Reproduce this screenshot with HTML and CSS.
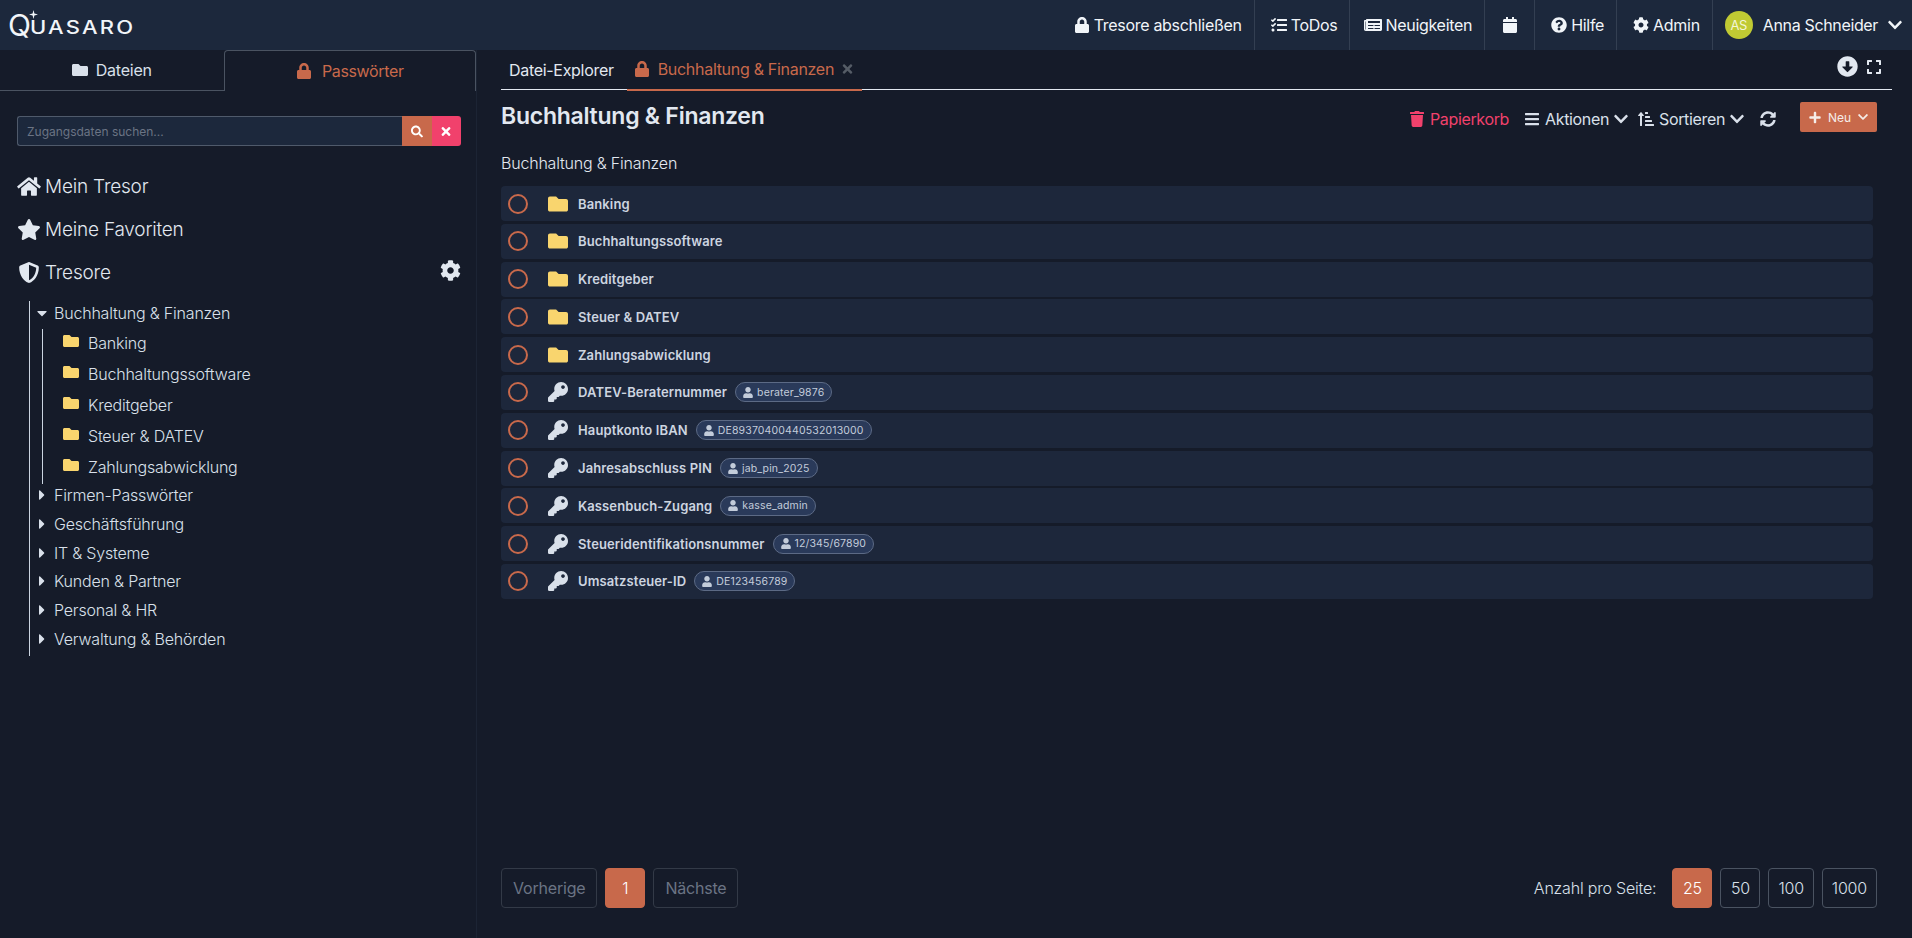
FILE: index.html
```html
<!DOCTYPE html>
<html lang="de">
<head>
  <meta charset="UTF-8">
  <title>Quasaro – Buchhaltung & Finanzen</title>
  <link rel="stylesheet" href="styles.css">
</head>
<body>

<!-- Icons -->
<svg class="sprite" xmlns="http://www.w3.org/2000/svg">
  <symbol id="i-folder" viewBox="0 0 512 512"><path d="M464 128H272l-64-64H48C21.49 64 0 85.49 0 112v288c0 26.51 21.49 48 48 48h416c26.51 0 48-21.49 48-48V176c0-26.51-21.49-48-48-48z"/></symbol>
  <symbol id="i-lock" viewBox="0 0 448 512"><path d="M400 224h-24v-72C376 68.2 307.8 0 224 0S72 68.2 72 152v72H48c-26.5 0-48 21.5-48 48v192c0 26.5 21.5 48 48 48h352c26.5 0 48-21.5 48-48V272c0-26.5-21.5-48-48-48zm-104 0H152v-72c0-39.7 32.3-72 72-72s72 32.3 72 72v72z"/></symbol>
  <symbol id="i-search" viewBox="0 0 512 512"><path d="M505 442.7L405.3 343c-4.5-4.5-10.6-7-17-7H372c27.6-35.3 44-79.7 44-128C416 93.1 322.9 0 208 0S0 93.1 0 208s93.1 208 208 208c48.3 0 92.7-16.4 128-44v16.3c0 6.4 2.5 12.5 7 17l99.7 99.7c9.4 9.4 24.6 9.4 33.9 0l28.3-28.3c9.4-9.4 9.4-24.6.1-34zM208 336c-70.7 0-128-57.2-128-128 0-70.7 57.2-128 128-128 70.7 0 128 57.2 128 128 0 70.7-57.2 128-128 128z"/></symbol>
  <symbol id="i-times" viewBox="0 0 352 512"><path d="M242.72 256l100.07-100.07c12.28-12.28 12.28-32.19 0-44.48l-22.24-22.24c-12.28-12.28-32.19-12.28-44.48 0L176 189.28 75.93 89.21c-12.28-12.28-32.19-12.28-44.48 0L9.21 111.45c-12.28 12.28-12.28 32.19 0 44.48L109.28 256 9.21 356.07c-12.28 12.28-12.28 32.19 0 44.48l22.24 22.24c12.28 12.28 32.2 12.28 44.48 0L176 322.72l100.07 100.07c12.28 12.28 32.2 12.28 44.48 0l22.24-22.24c12.28-12.28 12.28-32.19 0-44.48L242.72 256z"/></symbol>
  <symbol id="i-home" viewBox="0 0 576 512"><path d="M280.37 148.26L96 300.11V464a16 16 0 0 0 16 16l112.06-.29a16 16 0 0 0 15.92-16V368a16 16 0 0 1 16-16h64a16 16 0 0 1 16 16v95.64a16 16 0 0 0 16 16.05L464 480a16 16 0 0 0 16-16V300L295.67 148.26a12.19 12.19 0 0 0-15.3 0zM571.6 251.47L488 182.56V44.05a12 12 0 0 0-12-12h-56a12 12 0 0 0-12 12v72.61L318.47 43a48 48 0 0 0-61 0L4.34 251.47a12 12 0 0 0-1.6 16.9l25.5 31A12 12 0 0 0 45.15 301l235.22-193.74a12.19 12.19 0 0 1 15.3 0L530.9 301a12 12 0 0 0 16.9-1.6l25.5-31a12 12 0 0 0-1.7-16.93z"/></symbol>
  <symbol id="i-star" viewBox="0 0 576 512"><path d="M259.3 17.8L194 150.2 47.9 171.5c-26.2 3.8-36.7 36.1-17.7 54.6l105.7 103-25 145.5c-4.5 26.3 23.2 46 46.4 33.7L288 439.6l130.7 68.7c23.2 12.2 50.9-7.4 46.4-33.7l-25-145.5 105.7-103c19-18.5 8.5-50.8-17.7-54.6L382 150.2 316.7 17.8c-11.7-23.6-45.6-23.9-57.4 0z"/></symbol>
  <symbol id="i-shield" viewBox="0 0 512 512"><path d="M466.5 83.7l-192-80a48.15 48.15 0 0 0-36.9 0l-192 80C27.7 91.1 16 108.6 16 128c0 198.5 114.5 335.7 221.5 380.3 11.8 4.9 25.1 4.9 36.9 0C360.1 472.6 496 349.3 496 128c0-19.4-11.7-36.9-29.5-44.3zM256.1 446.3l-.1-381 175.9 73.3c-3.3 151.4-82.1 261.1-175.8 307.7z"/></symbol>
  <symbol id="i-cog" viewBox="0 0 512 512"><path d="M487.4 315.7l-42.6-24.6c4.3-23.2 4.3-47 0-70.2l42.6-24.6c4.9-2.8 7.1-8.6 5.5-14-11.1-35.6-30-67.8-54.7-94.6-3.8-4.1-10-5.1-14.8-2.3L380.8 110c-17.9-15.4-38.5-27.3-60.8-35.1V25.8c0-5.6-3.9-10.5-9.4-11.7-36.7-8.2-74.3-7.8-109.2 0-5.5 1.2-9.4 6.1-9.4 11.7V75c-22.2 7.9-42.8 19.8-60.8 35.1L88.7 85.5c-4.9-2.8-11-1.9-14.8 2.3-24.7 26.7-43.6 58.9-54.7 94.6-1.7 5.4.6 11.2 5.5 14L67.3 221c-4.3 23.2-4.3 47 0 70.2l-42.6 24.6c-4.9 2.8-7.1 8.6-5.5 14 11.1 35.6 30 67.8 54.7 94.6 3.8 4.1 10 5.1 14.8 2.3l42.6-24.6c17.9 15.4 38.5 27.3 60.8 35.1v49.2c0 5.6 3.9 10.5 9.4 11.7 36.7 8.2 74.3 7.8 109.2 0 5.5-1.2 9.4-6.1 9.4-11.7v-49.2c22.2-7.9 42.8-19.8 60.8-35.1l42.6 24.6c4.9 2.8 11 1.9 14.8-2.3 24.7-26.7 43.6-58.9 54.7-94.6 1.5-5.5-.7-11.3-5.6-14.1zM256 336c-44.1 0-80-35.9-80-80s35.9-80 80-80 80 35.9 80 80-35.9 80-80 80z"/></symbol>
  <symbol id="i-caret-down" viewBox="0 0 320 512"><path d="M31.3 192h257.3c17.8 0 26.7 21.5 14.1 34.1L174.1 354.8c-7.8 7.8-20.5 7.8-28.3 0L17.2 226.1C4.6 213.5 13.5 192 31.3 192z"/></symbol>
  <symbol id="i-caret-right" viewBox="0 0 192 512"><path d="M0 384.662V127.338c0-17.818 21.543-26.741 34.142-14.142l128.662 128.662c7.81 7.81 7.81 20.474 0 28.284L34.142 398.804C21.543 411.404 0 402.48 0 384.662z"/></symbol>
  <symbol id="i-key" viewBox="0 0 512 512"><path d="M512 176.001C512 273.203 433.202 352 336 352c-11.22 0-22.19-1.062-32.827-3.069l-24.012 27.014A23.999 23.999 0 0 1 261.223 384H224v40c0 13.255-10.745 24-24 24h-40v40c0 13.255-10.745 24-24 24H24c-13.255 0-24-10.745-24-24v-78.059c0-6.365 2.529-12.47 7.029-16.971l161.802-161.802C163.108 213.814 160 195.271 160 176 160 78.798 238.797.001 335.999 0 433.488-.001 512 78.511 512 176.001zM336 128c0 26.51 21.49 48 48 48s48-21.49 48-48-21.49-48-48-48-48 21.49-48 48z"/></symbol>
  <symbol id="i-user" viewBox="0 0 448 512"><path d="M224 256c70.7 0 128-57.3 128-128S294.7 0 224 0 96 57.3 96 128s57.3 128 128 128zm89.6 32h-16.7c-22.2 10.2-46.9 16-72.9 16s-50.6-5.8-72.9-16h-16.7C60.2 288 0 348.2 0 422.4V464c0 26.5 21.5 48 48 48h352c26.5 0 48-21.5 48-48v-41.6c0-74.2-60.2-134.4-134.4-134.4z"/></symbol>
  <symbol id="i-tasks" viewBox="0 0 512 512"><path d="M139.61 35.5a12 12 0 0 0-17 0L58.93 98.81l-22.7-22.12a12 12 0 0 0-17 0L3.53 92.41a12 12 0 0 0 0 17l47.59 47.4a12.78 12.78 0 0 0 17.61 0l15.59-15.62L156.52 69a12.09 12.09 0 0 0 .09-17zm0 159.19a12 12 0 0 0-17 0l-63.68 63.72-22.7-22.1a12 12 0 0 0-17 0L3.53 252a12 12 0 0 0 0 17L51 316.5a12.77 12.77 0 0 0 17.6 0l15.7-15.69 72.2-72.22a12 12 0 0 0 .09-16.9zM64 368c-26.49 0-48.59 21.5-48.59 48S37.53 464 64 464a48 48 0 0 0 0-96zm432 16H208a16 16 0 0 0-16 16v32a16 16 0 0 0 16 16h288a16 16 0 0 0 16-16v-32a16 16 0 0 0-16-16zm0-320H208a16 16 0 0 0-16 16v32a16 16 0 0 0 16 16h288a16 16 0 0 0 16-16V80a16 16 0 0 0-16-16zm0 160H208a16 16 0 0 0-16 16v32a16 16 0 0 0 16 16h288a16 16 0 0 0 16-16v-32a16 16 0 0 0-16-16z"/></symbol>
  <symbol id="i-news" viewBox="0 0 576 512"><path d="M552 64H88c-13.255 0-24 10.745-24 24v8H24c-13.255 0-24 10.745-24 24v272c0 30.928 25.072 56 56 56h472c26.51 0 48-21.49 48-48V88c0-13.255-10.745-24-24-24zM56 400a8 8 0 0 1-8-8V144h16v248a8 8 0 0 1-8 8zm236-16H140c-6.627 0-12-5.373-12-12v-8c0-6.627 5.373-12 12-12h152c6.627 0 12 5.373 12 12v8c0 6.627-5.373 12-12 12zm208 0H348c-6.627 0-12-5.373-12-12v-8c0-6.627 5.373-12 12-12h152c6.627 0 12 5.373 12 12v8c0 6.627-5.373 12-12 12zm-208-96H140c-6.627 0-12-5.373-12-12v-8c0-6.627 5.373-12 12-12h152c6.627 0 12 5.373 12 12v8c0 6.627-5.373 12-12 12zm208 0H348c-6.627 0-12-5.373-12-12v-8c0-6.627 5.373-12 12-12h152c6.627 0 12 5.373 12 12v8c0 6.627-5.373 12-12 12zm0-96H140c-6.627 0-12-5.373-12-12v-40c0-6.627 5.373-12 12-12h360c6.627 0 12 5.373 12 12v40c0 6.627-5.373 12-12 12z"/></symbol>
  <symbol id="i-calendar" viewBox="0 0 448 512"><path d="M12 192h424c6.6 0 12 5.4 12 12v260c0 26.5-21.5 48-48 48H48c-26.5 0-48-21.5-48-48V204c0-6.6 5.4-12 12-12zm436-44v-36c0-26.5-21.5-48-48-48h-48V12c0-6.6-5.4-12-12-12h-40c-6.6 0-12 5.4-12 12v52H160V12c0-6.6-5.4-12-12-12h-40c-6.6 0-12 5.4-12 12v52H48C21.5 64 0 85.5 0 112v36c0 6.6 5.4 12 12 12h424c6.6 0 12-5.4 12-12z"/></symbol>
  <symbol id="i-help" viewBox="0 0 512 512"><path d="M504 256c0 136.997-111.043 248-248 248S8 392.997 8 256C8 119.083 119.043 8 256 8s248 111.083 248 248zM262.655 90c-54.497 0-89.255 22.957-116.549 63.758-3.536 5.286-2.353 12.415 2.715 16.258l34.699 26.31c5.205 3.947 12.621 3.008 16.665-2.122 17.864-22.658 30.113-35.797 57.303-35.797 20.429 0 45.698 13.148 45.698 32.958 0 14.976-12.363 22.667-32.534 33.976C247.128 238.528 216 254.941 216 296v4c0 6.627 5.373 12 12 12h56c6.627 0 12-5.373 12-12v-1.333c0-28.462 83.186-29.647 83.186-106.667 0-58.002-60.165-102-116.531-102zM256 338c-25.365 0-46 20.635-46 46 0 25.364 20.635 46 46 46s46-20.636 46-46c0-25.365-20.635-46-46-46z"/></symbol>
  <symbol id="i-chevron" viewBox="0 0 448 512"><path d="M207.029 381.476L12.686 187.132c-9.373-9.373-9.373-24.569 0-33.941l22.667-22.667c9.357-9.357 24.522-9.375 33.901-.04L224 284.505l154.745-154.021c9.379-9.335 24.544-9.317 33.901.04l22.667 22.667c9.373 9.373 9.373 24.569 0 33.941L240.971 381.476c-9.373 9.372-24.569 9.372-33.942 0z"/></symbol>
  <symbol id="i-arrow-circle" viewBox="0 0 512 512"><path d="M504 256c0 137-111 248-248 248S8 393 8 256 119 8 256 8s248 111 248 248zM212 140v116h-70.9c-10.7 0-16.1 13-8.5 20.5l114.9 114.3c4.7 4.7 12.2 4.7 16.9 0l114.9-114.3c7.6-7.6 2.2-20.5-8.5-20.5H300V140c0-6.6-5.4-12-12-12h-64c-6.6 0-12 5.4-12 12z"/></symbol>
  <symbol id="i-expand" viewBox="0 0 448 512"><path d="M0 180V56c0-13.3 10.7-24 24-24h124c6.6 0 12 5.4 12 12v40c0 6.6-5.4 12-12 12H64v84c0 6.6-5.4 12-12 12H12c-6.6 0-12-5.4-12-12zM288 44v40c0 6.6 5.4 12 12 12h84v84c0 6.6 5.4 12 12 12h40c6.6 0 12-5.4 12-12V56c0-13.3-10.7-24-24-24H300c-6.6 0-12 5.4-12 12zm148 276h-40c-6.6 0-12 5.4-12 12v84h-84c-6.6 0-12 5.4-12 12v40c0 6.6 5.4 12 12 12h124c13.3 0 24-10.7 24-24V332c0-6.6-5.4-12-12-12zM160 468v-40c0-6.6-5.4-12-12-12H64v-84c0-6.6-5.4-12-12-12H12c-6.6 0-12 5.4-12 12v124c0 13.3 10.7 24 24 24h124c6.6 0 12-5.4 12-12z"/></symbol>
  <symbol id="i-trash" viewBox="0 0 448 512"><path d="M432 32H312l-9.4-18.7A24 24 0 0 0 281.1 0H166.8a23.72 23.72 0 0 0-21.4 13.3L136 32H16A16 16 0 0 0 0 48v32a16 16 0 0 0 16 16h416a16 16 0 0 0 16-16V48a16 16 0 0 0-16-16zM53.2 467a48 48 0 0 0 47.9 45h245.8a48 48 0 0 0 47.9-45L416 128H32z"/></symbol>
  <symbol id="i-bars" viewBox="0 0 448 512"><path d="M16 132h416c8.837 0 16-7.163 16-16V76c0-8.837-7.163-16-16-16H16C7.163 60 0 67.163 0 76v40c0 8.837 7.163 16 16 16zm0 160h416c8.837 0 16-7.163 16-16v-40c0-8.837-7.163-16-16-16H16c-8.837 0-16 7.163-16 16v40c0 8.837 7.163 16 16 16zm0 160h416c8.837 0 16-7.163 16-16v-40c0-8.837-7.163-16-16-16H16c-8.837 0-16 7.163-16 16v40c0 8.837 7.163 16 16 16z"/></symbol>
  <symbol id="i-sort" viewBox="0 0 512 512"><path d="M240 96h64a16 16 0 0 0 16-16V48a16 16 0 0 0-16-16h-64a16 16 0 0 0-16 16v32a16 16 0 0 0 16 16zm0 128h128a16 16 0 0 0 16-16v-32a16 16 0 0 0-16-16H240a16 16 0 0 0-16 16v32a16 16 0 0 0 16 16zm256 192H240a16 16 0 0 0-16 16v32a16 16 0 0 0 16 16h256a16 16 0 0 0 16-16v-32a16 16 0 0 0-16-16zm-256-64h192a16 16 0 0 0 16-16v-32a16 16 0 0 0-16-16H240a16 16 0 0 0-16 16v32a16 16 0 0 0 16 16zM16 160h48v304a16 16 0 0 0 16 16h32a16 16 0 0 0 16-16V160h48c14.21 0 21.39-17.24 11.31-27.31l-80-96a16 16 0 0 0-22.62 0l-80 96C-5.35 142.74 1.78 160 16 160z"/></symbol>
  <symbol id="i-sync" viewBox="0 0 512 512"><path d="M370.72 133.28C339.458 104.008 298.888 87.962 255.848 88c-77.458.068-144.328 53.178-162.791 126.85-1.344 5.363-6.122 9.15-11.651 9.15H24.103c-7.498 0-13.194-6.807-11.807-14.176C33.933 94.924 134.813 8 256 8c66.448 0 126.791 26.136 171.315 68.685L463.03 40.97C478.149 25.851 504 36.559 504 57.941V192c0 13.255-10.745 24-24 24H345.941c-21.382 0-32.09-25.851-16.971-40.971l41.75-41.749zM32 296h134.059c21.382 0 32.09 25.851 16.971 40.971l-41.75 41.75c31.262 29.273 71.835 45.319 114.876 45.28 77.418-.07 144.315-53.144 162.787-126.849 1.344-5.363 6.122-9.15 11.651-9.15h57.304c7.498 0 13.194 6.807 11.807 14.176C478.067 417.076 377.187 504 256 504c-66.448 0-126.791-26.136-171.315-68.685L48.97 471.03C33.851 486.149 8 475.441 8 454.059V320c0-13.255 10.745-24 24-24z"/></symbol>
  <symbol id="i-plus" viewBox="0 0 448 512"><path d="M416 208H272V64c0-17.67-14.33-32-32-32h-32c-17.67 0-32 14.33-32 32v144H32c-17.67 0-32 14.33-32 32v32c0 17.67 14.33 32 32 32h144v144c0 17.67 14.33 32 32 32h32c17.67 0 32-14.33 32-32V304h144c17.67 0 32-14.33 32-32v-32c0-17.67-14.33-32-32-32z"/></symbol>
</svg>

<header class="topbar">
  <div class="logo">
    <span class="logo-q">Q</span><span class="logo-rest">UASARO</span>
    <svg class="logo-spark" viewBox="0 0 10 10"><path d="M5 0 L6 4 L10 5 L6 6 L5 10 L4 6 L0 5 L4 4 Z"/></svg>
  </div>
  <nav class="topnav">
    <a class="topnav-item"><svg class="ic ic-15"><use href="#i-lock"/></svg>Tresore abschließen</a>
    <a class="topnav-item"><svg class="ic ic-16"><use href="#i-tasks"/></svg>ToDos</a>
    <a class="topnav-item item-news"><svg class="ic ic-18"><use href="#i-news"/></svg>Neuigkeiten</a>
    <a class="topnav-item item-cal"><svg class="ic ic-15"><use href="#i-calendar"/></svg></a>
    <a class="topnav-item"><svg class="ic ic-16"><use href="#i-help"/></svg>Hilfe</a>
    <a class="topnav-item"><svg class="ic ic-16"><use href="#i-cog"/></svg>Admin</a>
    <a class="topnav-item topnav-user">
      <span class="avatar">AS</span>
      <span class="user-name">Anna Schneider</span>
      <svg class="ic ic-14"><use href="#i-chevron"/></svg>
    </a>
  </nav>
</header>

<div class="layout">
  <aside class="sidebar">
    <div class="side-tabs">
      <div class="side-tab"><svg class="ic ic-16"><use href="#i-folder"/></svg>Dateien</div>
      <div class="side-tab active"><svg class="ic ic-16"><use href="#i-lock"/></svg>Passwörter</div>
    </div>

    <div class="search">
      <input class="search-input" type="text" placeholder="Zugangsdaten suchen...">
      <button class="search-btn go"><svg class="ic ic-12"><use href="#i-search"/></svg></button>
      <button class="search-btn clear"><svg class="ic ic-12"><use href="#i-times"/></svg></button>
    </div>

    <div class="side-nav">
      <div class="side-link"><svg class="ic ic-side"><use href="#i-home"/></svg>Mein Tresor</div>
      <div class="side-link"><svg class="ic ic-side"><use href="#i-star"/></svg>Meine Favoriten</div>
      <div class="side-link">
        <svg class="ic ic-side"><use href="#i-shield"/></svg>Tresore
        <svg class="ic ic-gear"><use href="#i-cog"/></svg>
      </div>
    </div>

    <div class="tree">
      <div class="tree-row open"><svg class="ic caret"><use href="#i-caret-down"/></svg>Buchhaltung &amp; Finanzen</div>
      <div class="tree-children">
        <div class="tree-child"><svg class="ic tree-folder"><use href="#i-folder"/></svg>Banking</div>
        <div class="tree-child"><svg class="ic tree-folder"><use href="#i-folder"/></svg>Buchhaltungssoftware</div>
        <div class="tree-child"><svg class="ic tree-folder"><use href="#i-folder"/></svg>Kreditgeber</div>
        <div class="tree-child"><svg class="ic tree-folder"><use href="#i-folder"/></svg>Steuer &amp; DATEV</div>
        <div class="tree-child"><svg class="ic tree-folder"><use href="#i-folder"/></svg>Zahlungsabwicklung</div>
      </div>
      <div class="tree-row"><svg class="ic caret"><use href="#i-caret-right"/></svg>Firmen-Passwörter</div>
      <div class="tree-row"><svg class="ic caret"><use href="#i-caret-right"/></svg>Geschäftsführung</div>
      <div class="tree-row"><svg class="ic caret"><use href="#i-caret-right"/></svg>IT &amp; Systeme</div>
      <div class="tree-row"><svg class="ic caret"><use href="#i-caret-right"/></svg>Kunden &amp; Partner</div>
      <div class="tree-row"><svg class="ic caret"><use href="#i-caret-right"/></svg>Personal &amp; HR</div>
      <div class="tree-row"><svg class="ic caret"><use href="#i-caret-right"/></svg>Verwaltung &amp; Behörden</div>
    </div>
  </aside>

  <main class="main">
    <div class="main-tabs">
      <div class="main-tab">Datei-Explorer</div>
      <div class="main-tab active">
        <svg class="ic ic-16"><use href="#i-lock"/></svg>Buchhaltung &amp; Finanzen
        <svg class="ic ic-close"><use href="#i-times"/></svg>
      </div>
      <div class="tab-tools">
        <svg class="ic ic-20"><use href="#i-arrow-circle"/></svg>
        <svg class="ic ic-16"><use href="#i-expand"/></svg>
      </div>
    </div>

    <div class="title-row">
      <h1>Buchhaltung &amp; Finanzen</h1>
      <div class="toolbar">
        <a class="tool trash"><svg class="ic ic-16"><use href="#i-trash"/></svg>Papierkorb</a>
        <a class="tool tool-actions"><svg class="ic ic-16"><use href="#i-bars"/></svg>Aktionen<svg class="ic ic-14"><use href="#i-chevron"/></svg></a>
        <a class="tool tool-sort"><svg class="ic ic-16"><use href="#i-sort"/></svg>Sortieren<svg class="ic ic-14"><use href="#i-chevron"/></svg></a>
        <a class="tool tool-sync"><svg class="ic ic-16"><use href="#i-sync"/></svg></a>
        <button class="btn-new"><svg class="ic ic-12"><use href="#i-plus"/></svg>Neu<svg class="ic ic-11"><use href="#i-chevron"/></svg></button>
      </div>
    </div>

    <div class="crumb">Buchhaltung &amp; Finanzen</div>

    <div class="list">
      <div class="row"><span class="radio"></span><svg class="ic row-folder"><use href="#i-folder"/></svg><span class="row-name">Banking</span></div>
      <div class="row"><span class="radio"></span><svg class="ic row-folder"><use href="#i-folder"/></svg><span class="row-name">Buchhaltungssoftware</span></div>
      <div class="row"><span class="radio"></span><svg class="ic row-folder"><use href="#i-folder"/></svg><span class="row-name">Kreditgeber</span></div>
      <div class="row"><span class="radio"></span><svg class="ic row-folder"><use href="#i-folder"/></svg><span class="row-name">Steuer &amp; DATEV</span></div>
      <div class="row"><span class="radio"></span><svg class="ic row-folder"><use href="#i-folder"/></svg><span class="row-name">Zahlungsabwicklung</span></div>
      <div class="row"><span class="radio"></span><svg class="ic row-key"><use href="#i-key"/></svg><span class="row-name">DATEV-Beraternummer</span><span class="badge"><svg class="ic ic-10"><use href="#i-user"/></svg>berater_9876</span></div>
      <div class="row"><span class="radio"></span><svg class="ic row-key"><use href="#i-key"/></svg><span class="row-name">Hauptkonto IBAN</span><span class="badge"><svg class="ic ic-10"><use href="#i-user"/></svg>DE89370400440532013000</span></div>
      <div class="row"><span class="radio"></span><svg class="ic row-key"><use href="#i-key"/></svg><span class="row-name">Jahresabschluss PIN</span><span class="badge"><svg class="ic ic-10"><use href="#i-user"/></svg>jab_pin_2025</span></div>
      <div class="row"><span class="radio"></span><svg class="ic row-key"><use href="#i-key"/></svg><span class="row-name">Kassenbuch-Zugang</span><span class="badge"><svg class="ic ic-10"><use href="#i-user"/></svg>kasse_admin</span></div>
      <div class="row"><span class="radio"></span><svg class="ic row-key"><use href="#i-key"/></svg><span class="row-name">Steueridentifikationsnummer</span><span class="badge"><svg class="ic ic-10"><use href="#i-user"/></svg>12/345/67890</span></div>
      <div class="row"><span class="radio"></span><svg class="ic row-key"><use href="#i-key"/></svg><span class="row-name">Umsatzsteuer-ID</span><span class="badge"><svg class="ic ic-10"><use href="#i-user"/></svg>DE123456789</span></div>
    </div>

    <div class="pager-row">
      <div class="pager">
        <span class="page off">Vorherige</span>
        <span class="page on">1</span>
        <span class="page off">Nächste</span>
      </div>
      <div class="pager">
        <span class="per-label">Anzahl pro Seite:</span>
        <span class="page on">25</span>
        <span class="page">50</span>
        <span class="page">100</span>
        <span class="page">1000</span>
      </div>
    </div>
  </main>
</div>

</body>
</html>
```

FILE: styles.css
```css
* {
  box-sizing: border-box;
}

html, body {
  height: 100%;
}

body {
  margin: 0;
  display: flex;
  flex-direction: column;
  overflow: hidden;
  background: #151b29;
  color: #e2e8f0;
  font-family: Inter, "Noto Sans", sans-serif;
  font-size: 16px;
  letter-spacing: -0.2px;
}

.sprite {
  display: none;
}

.ic {
  display: block;
  flex: none;
  fill: currentColor;
}

.ic-10 { width: 10px; height: 11px; }
.ic-11 { width: 10px; height: 12px; }
.ic-12 { width: 12px; height: 13px; }
.ic-14 { width: 14px; height: 16px; }
.ic-15 { width: 14px; height: 16px; }
.ic-16 { width: 16px; height: 16px; }
.ic-18 { width: 18px; height: 16px; }
.ic-20 { width: 21px; height: 21px; }

/* top bar */
.topbar {
  height: 50px;
  flex: none;
  display: flex;
  justify-content: space-between;
  background: #1c283c;
}

.logo {
  position: relative;
  display: flex;
  align-items: center;
  padding-left: 8px;
  color: #f1f5f9;
}

.logo-q {
  font-size: 30px;
  line-height: 1;
}

.logo-rest {
  margin-left: -1px;
  padding-top: 4px;
  font-size: 18px;
  font-weight: 500;
  letter-spacing: 1.8px;
  transform: scaleX(1.22);
  transform-origin: left center;
}

.logo-spark {
  position: absolute;
  left: 29px;
  top: 10px;
  width: 9px;
  height: 9px;
  fill: #f1f5f9;
}

.topnav {
  display: flex;
  align-items: stretch;
  letter-spacing: -0.3px;
}

.topnav-item {
  display: flex;
  align-items: center;
  gap: 4px;
  padding: 0 12px 0 16px;
  border-left: 1px solid #333f52;
  color: #f1f5f9;
  white-space: nowrap;
}

.topnav-item:first-child {
  border-left: 0;
  gap: 5px;
}

.item-news {
  gap: 3px;
  padding-left: 14px;
}

.item-cal {
  width: 50px;
  padding: 0;
  justify-content: center;
}

.topnav-user {
  gap: 0;
  padding: 0 10px 0 12px;
}

.avatar {
  width: 28px;
  height: 28px;
  border-radius: 50%;
  display: flex;
  align-items: center;
  justify-content: center;
  background: #c0ca33;
  color: #f4f6d8;
  font-size: 13px;
}

.user-name {
  margin: 0 10px 0 10px;
  letter-spacing: -0.35px;
}

/* layout */
.layout {
  flex: 1;
  min-height: 0;
  display: flex;
}

.sidebar {
  width: 477px;
  flex: none;
  border-right: 1px solid #1c2434;
}

.side-tabs {
  height: 41px;
  display: flex;
}

.side-tab {
  width: 224px;
  display: flex;
  align-items: center;
  justify-content: center;
  gap: 8px;
  border-bottom: 1px solid #4a5361;
  color: #d9e0ea;
}

.side-tab.active {
  width: 253px;
  gap: 10px;
  border: 1px solid #4a5361;
  border-bottom: 0;
  border-radius: 4px 4px 0 0;
  color: #c8694b;
  letter-spacing: -0.35px;
}

.search {
  display: flex;
  height: 30px;
  margin: 25px 15px 0 17px;
}

.search-input {
  flex: 1;
  min-width: 0;
  padding: 0 9px;
  background: #1c283c;
  border: 1px solid #4f5a6b;
  border-right: 0;
  border-radius: 3px 0 0 3px;
  color: #e2e8f0;
  font-family: inherit;
  font-size: 12px;
}

.search-input::placeholder {
  color: #6b7484;
}

.search-btn {
  width: 29.5px;
  display: flex;
  align-items: center;
  justify-content: center;
  padding: 0;
  border: 0;
  color: #fff;
}

.search-btn.go { background: #c8694b; }
.search-btn.clear { background: #f1416c; border-radius: 0 3px 3px 0; }

.side-nav {
  margin: 19px 15px 0 17px;
}

.side-link {
  height: 43px;
  display: flex;
  align-items: center;
  gap: 4px;
  font-size: 19px;
  font-weight: 300;
  letter-spacing: -0.2px;
  color: #e2e8f0;
}

.ic-side {
  width: 24px;
  height: 21px;
}

.ic-gear {
  width: 21px;
  height: 21px;
  margin-left: auto;
  margin-top: -5px;
}

.tree {
  margin: 7px 0 0 29px;
  border-left: 1px solid #cbd5e1;
  height: 355px;
  font-weight: 300;
  color: #d9e0ea;
}

.tree-row {
  height: 22px;
  margin-bottom: 6.8px;
  display: flex;
  align-items: center;
  padding-left: 7px;
  line-height: 22px;
}

.tree-row.open {
  height: 24px;
  margin-bottom: 4px;
}

.caret {
  width: 10px;
  height: 16px;
  margin-right: 7px;
}

.tree-row:not(.open) .caret {
  width: 6px;
  margin: 0 9px 0 2px;
}

.tree-children {
  margin-left: 12px;
  border-left: 1px solid #cbd5e1;
  height: 155px;
}

.tree-child {
  height: 31px;
  display: flex;
  align-items: center;
  padding: 0 0 4px 20px;
}

.tree-folder {
  width: 16px;
  height: 16px;
  margin: -4px 9px 0 0;
  color: #f9d56e;
}

/* main */
.main {
  flex: 1;
  min-width: 0;
  display: flex;
  flex-direction: column;
  padding: 0 20px 30px 24px;
}

.main-tabs {
  height: 40px;
  flex: none;
  display: flex;
  border-bottom: 1.5px solid #e2e8f0;
  letter-spacing: -0.3px;
}

.main-tab {
  display: flex;
  align-items: center;
  padding: 0 8px;
  margin-right: 5px;
  color: #e2e8f0;
  white-space: nowrap;
}

.main-tab.active {
  width: 235px;
  margin: 0 0 -1.5px 0;
  padding-left: 7px;
  color: #c8694b;
  border-bottom: 2px solid #c8694b;
  gap: 8px;
}

.ic-close {
  width: 11px;
  height: 14px;
  color: #555c66;
}

.tab-tools {
  margin-left: auto;
  display: flex;
  align-items: center;
  gap: 8px;
  padding: 0 10px 6px 0;
  color: #e2e8f0;
}

.title-row {
  height: 54px;
  flex: none;
  display: flex;
  align-items: center;
  justify-content: space-between;
  margin-right: 15px;
}

h1 {
  margin: -2px 0 0;
  font-size: 23px;
  font-weight: 600;
  letter-spacing: -0.25px;
  color: #e2e8f0;
}

.toolbar {
  display: flex;
  align-items: center;
  color: #d9e0ea;
  letter-spacing: -0.35px;
}

.tool {
  display: flex;
  align-items: center;
  gap: 5px;
  margin: 3px 15px 0 0;
}

.tool.trash {
  color: #f1416c;
}

.tool-actions {
  margin-right: 10px;
}

.tool-sort {
  margin-right: 16px;
}

.tool-sync {
  margin-right: 24px;
}

.btn-new {
  width: 77px;
  height: 30px;
  display: flex;
  align-items: center;
  justify-content: center;
  gap: 7px;
  padding: 0;
  border: 0;
  border-radius: 2px;
  background: #c8694b;
  color: #f5ede9;
  font-family: inherit;
  font-size: 12px;
}

.crumb {
  margin-top: 9px;
  line-height: 20px;
  font-weight: 300;
  color: #e2e8f0;
}

.list {
  margin: 13px 19px 0 0;
}

.row {
  height: 35px;
  margin-bottom: 2.8px;
  display: flex;
  align-items: center;
  padding-left: 7px;
  border-radius: 4px;
  background: #1d273b;
}

.radio {
  width: 20px;
  height: 20px;
  flex: none;
  border: 2px solid #c8694b;
  border-radius: 50%;
  margin-right: 20px;
}

.row-folder,
.row-key {
  width: 20px;
  height: 20px;
  margin-right: 10px;
}

.row-folder {
  color: #f9d56e;
}

.row-key {
  color: #d9e0ea;
}

.row-name {
  font-size: 13px;
  font-weight: 600;
  letter-spacing: 0.12px;
  color: #cdd5e0;
}

.badge {
  height: 20px;
  display: flex;
  align-items: center;
  gap: 4px;
  margin-left: 8px;
  padding: 0 7px;
  border: 1px solid #5c6a85;
  border-radius: 10px;
  background: #2a3a5a;
  color: #c3ccda;
  font-size: 10.5px;
  letter-spacing: 0.15px;
}

.pager-row {
  margin: auto 15px 0 0;
  display: flex;
  justify-content: space-between;
}

.pager {
  display: flex;
  align-items: center;
  gap: 8px;
}

.page {
  height: 40px;
  min-width: 40px;
  display: flex;
  align-items: center;
  justify-content: center;
  padding: 0 9px;
  border: 1px solid #4a5361;
  border-radius: 4px;
  font-size: 16px;
  font-weight: 300;
  color: #d9e0ea;
}

.page.off {
  padding: 0 11px;
  border-color: #333a47;
  color: #6b7484;
  font-weight: 400;
}

.page.on {
  border-color: #c8694b;
  background: #c8694b;
  color: #fff;
}

.per-label {
  margin-right: 8px;
  font-weight: 300;
  color: #d9e0ea;
}
```
